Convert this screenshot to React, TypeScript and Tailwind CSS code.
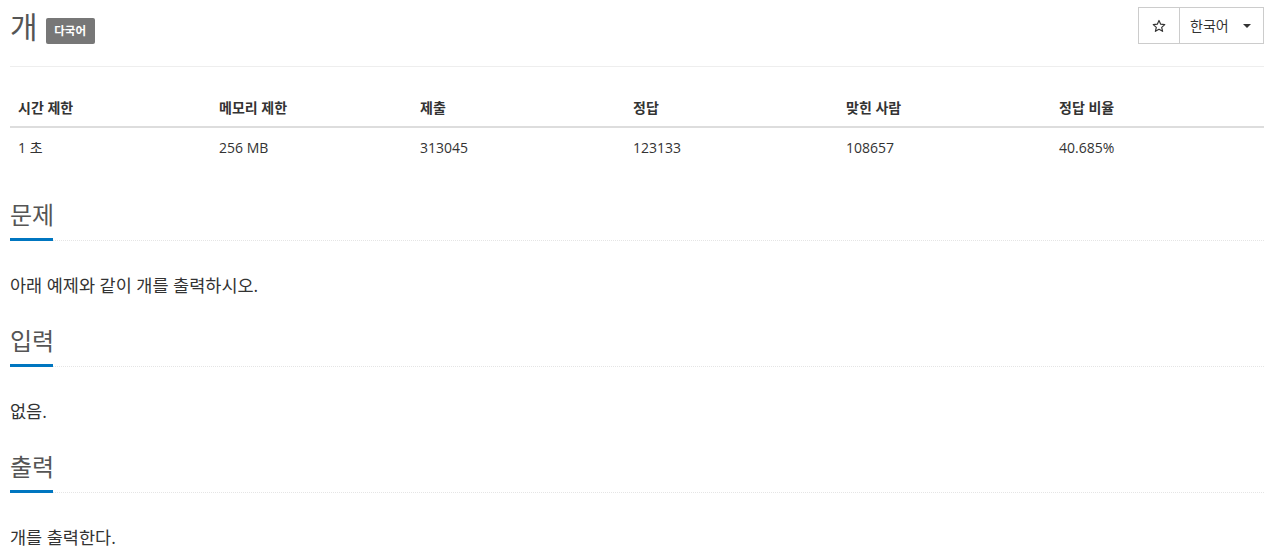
const font = { fontFamily: '"Open Sans", "Noto Sans CJK KR", sans-serif' };

const stats = [
  { label: '시간 제한', value: '1 초', w: 'w-[201px]' },
  { label: '메모리 제한', value: '256 MB', w: 'w-[201px]' },
  { label: '제출', value: '313045', w: 'w-[213px]' },
  { label: '정답', value: '123133', w: 'w-[213px]' },
  { label: '맞힌 사람', value: '108657', w: 'w-[213px]' },
  { label: '정답 비율', value: '40.685%', w: '' },
];

function Section({ title, body }: { title: string; body: string }) {
  return (
    <section className="mt-[27px]">
      <h2 className="pb-[6px] text-[24px] leading-[34px] text-[#555]">{title}</h2>
      <div className="flex items-end">
        <div className="h-[3px] w-[43px] bg-[#0076c0]" />
        <div className="flex-1 border-b border-dotted border-[#e5e5e5]" />
      </div>
      <p className="mt-[32px] text-[17.5px] leading-[24px] text-[#333]">{body}</p>
    </section>
  );
}

export default function App() {
  return (
    <div className="min-h-screen bg-white pl-[10px] pr-[6px] text-[#333]" style={font}>
      <div className="flex items-start justify-between border-b border-[#eee] pb-[20px] pt-[6px]">
        <div className="flex items-center gap-[8px] pt-[2px]">
          <span className="text-[30px] leading-[38px] text-[#555]">개</span>
          <span className="mt-[8px] flex h-[26px] w-[49px] items-center justify-center rounded-[2px] bg-[#777] text-[11.5px] font-bold text-white">
            다국어
          </span>
        </div>
        <div className="mt-[1px] flex h-[37px] text-[14px] text-[#333]">
          <button className="flex w-[42px] items-center justify-center border border-[#ccc] bg-white">
            <svg width="14" height="14" viewBox="0 0 24 24" fill="none" stroke="#333" strokeWidth="2" strokeLinejoin="round">
              <path d="M12 2.5l2.9 6.4 7 .7-5.3 4.7 1.6 6.9L12 17.6l-6.2 3.6 1.6-6.9L2.1 9.6l7-.7z" />
            </svg>
          </button>
          <button className="ml-[-1px] flex w-[85px] items-center gap-[14px] border border-[#ccc] bg-white pl-[10px]">
            <span>한국어</span>
            <span className="h-0 w-0 border-x-[4px] border-t-[4px] border-x-transparent border-t-[#333]" />
          </button>
        </div>
      </div>

      <table className="mt-[23px] w-full border-collapse text-[14px]">
        <thead>
          <tr className="border-b-2 border-[#ddd]">
            {stats.map((s) => (
              <th key={s.label} className={`${s.w} p-[8px] text-left font-bold leading-[20px] text-[#333]`}>
                {s.label}
              </th>
            ))}
          </tr>
        </thead>
        <tbody>
          <tr>
            {stats.map((s) => (
              <td key={s.label} className="px-[8px] pb-[8px] pt-[10px] leading-[20px] text-[#333]">
                {s.value}
              </td>
            ))}
          </tr>
        </tbody>
      </table>

      <div className="pt-[5px]">
        <Section title="문제" body="아래 예제와 같이 개를 출력하시오." />
        <Section title="입력" body="없음." />
        <Section title="출력" body="개를 출력한다." />
      </div>
    </div>
  );
}
